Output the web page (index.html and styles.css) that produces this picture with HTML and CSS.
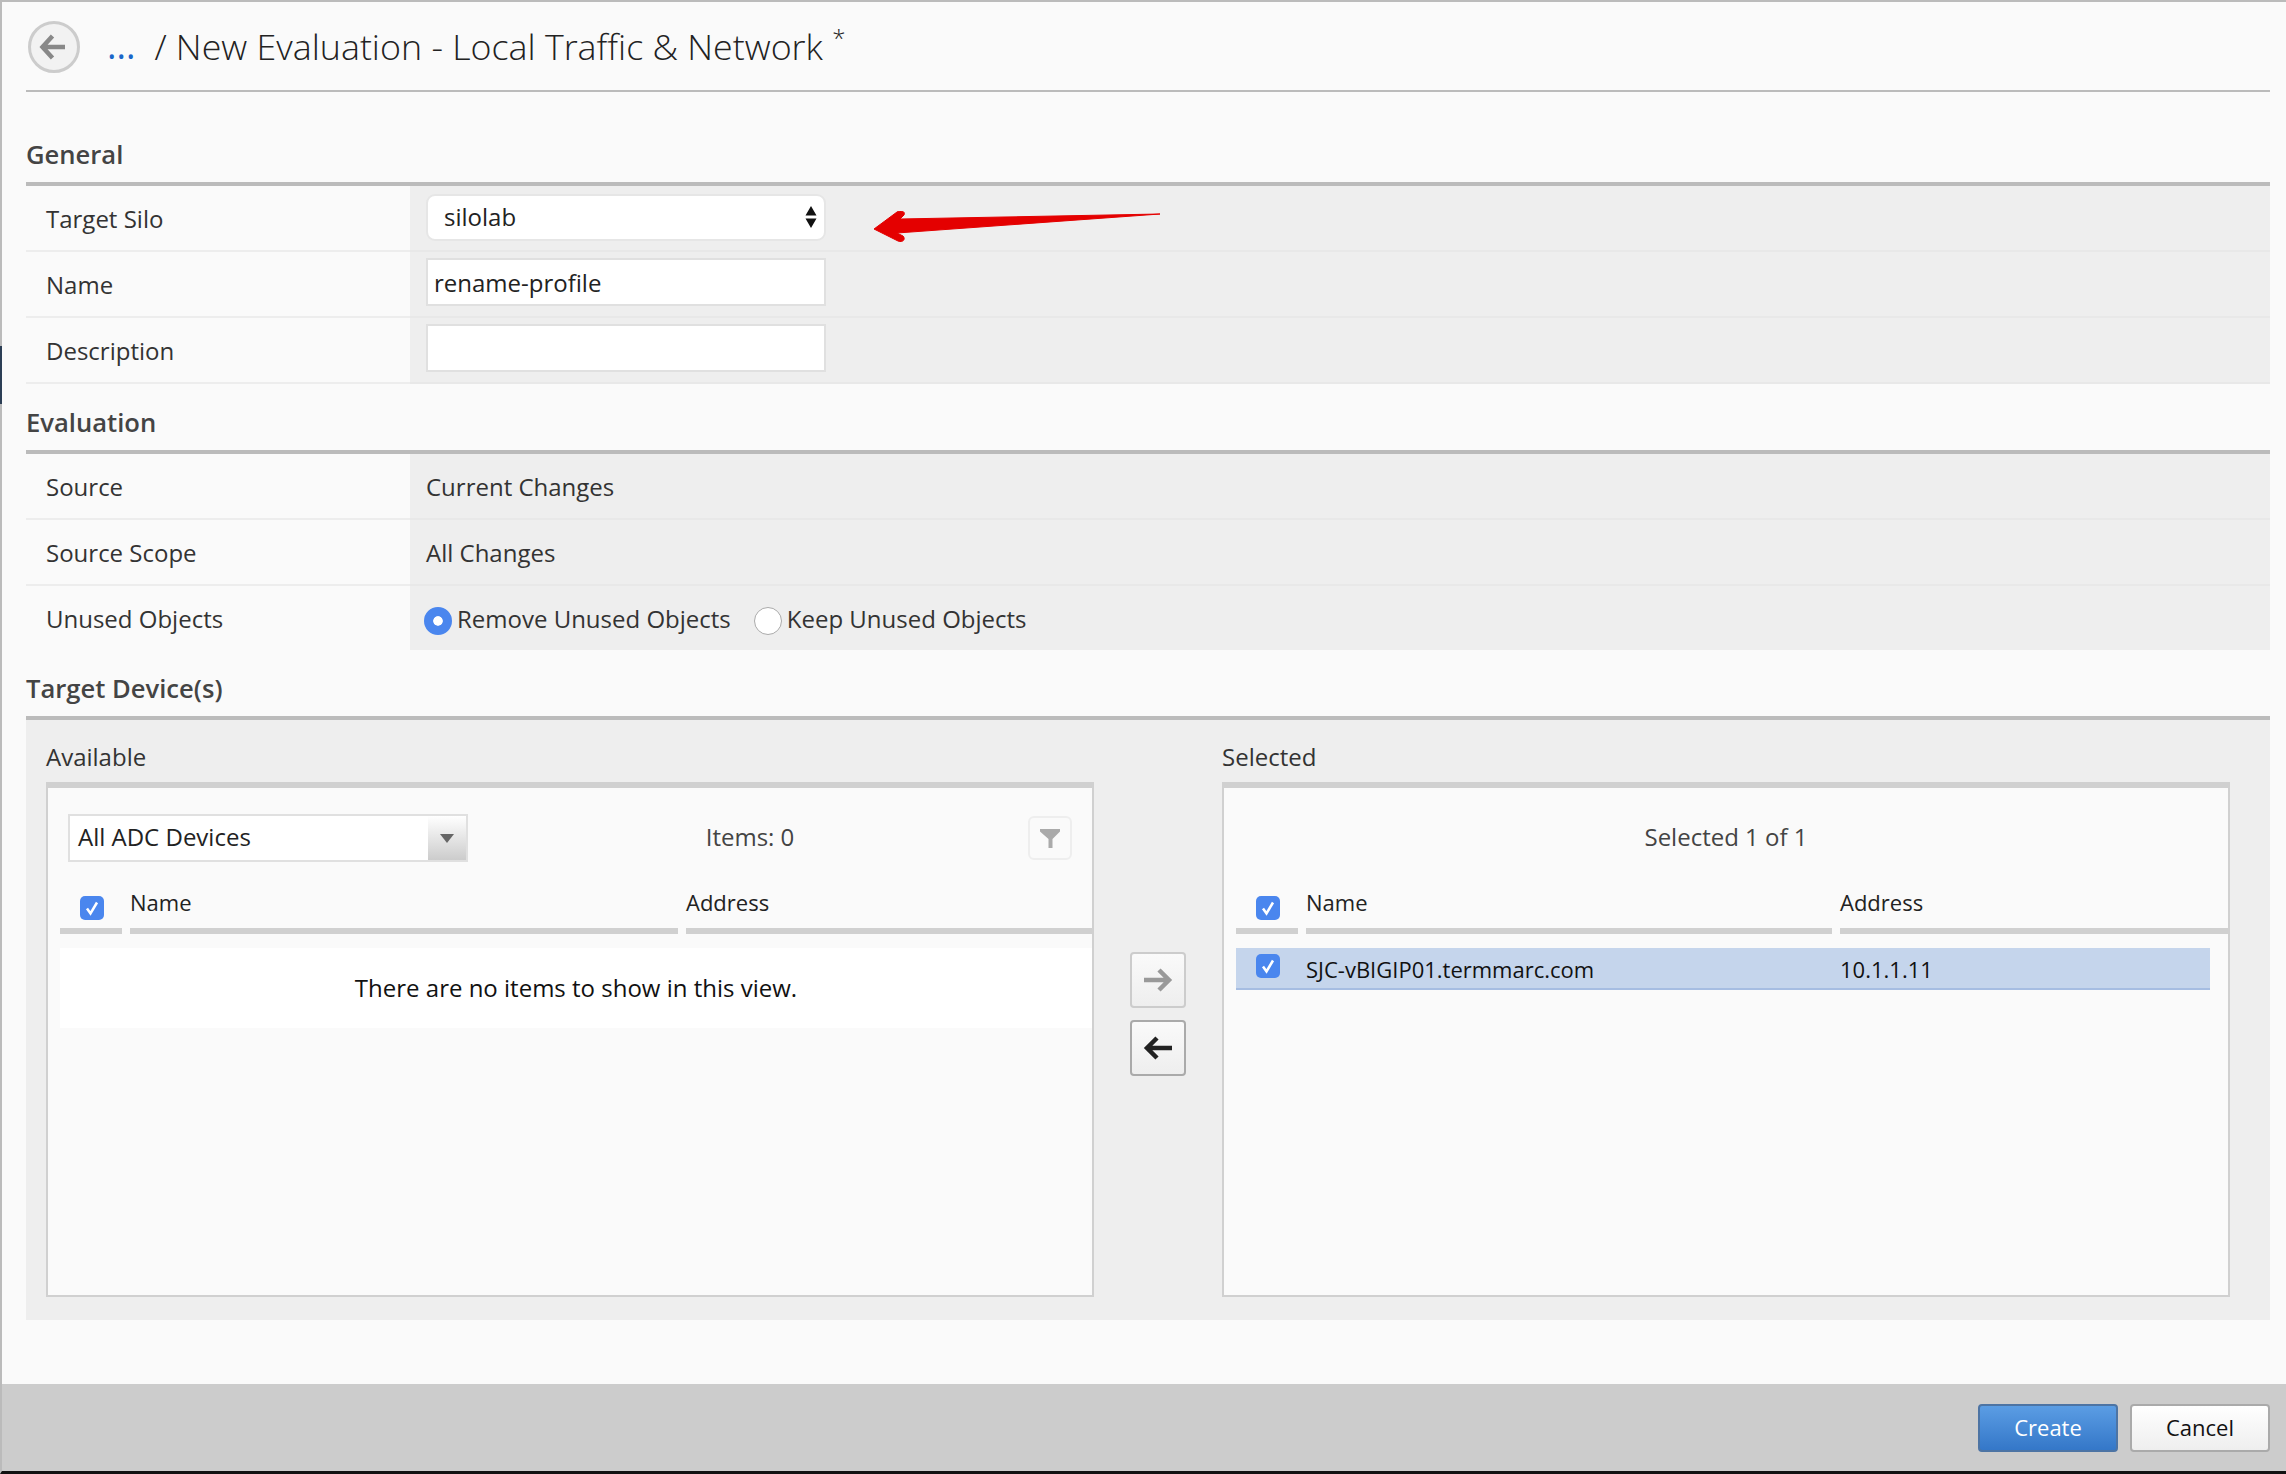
FILE: index.html
```html
<!DOCTYPE html>
<html lang="en">
<head>
  <meta charset="UTF-8">
  <title>New Evaluation - Local Traffic &amp; Network</title>
  <link rel="stylesheet" href="styles.css">
</head>
<body>
  <div class="window">
    <span class="edge-mark"></span>
    <div class="content">
      <div class="page-head">
        <a class="back-btn" href="#">
          <svg width="32" height="32" viewBox="0 0 32 32"><path d="M14.500 5 4.500 16l10 11M5 16h22" fill="none" stroke="#888" stroke-width="4.500"/></svg>
        </a>
        <a class="crumb" href="#">...</a>
        <h1 class="page-title">/ New Evaluation - Local Traffic &amp; Network <sup class="mark">*</sup></h1>
      </div>

      <h2 class="section-title">General</h2>
      <div class="form-row">
        <div class="form-label">Target Silo</div>
        <div class="form-value">
          <div class="fake-select">
            <span>silolab</span>
            <svg width="12" height="24" viewBox="0 0 12 24"><path d="M6 1 11.500 10.500H.5zM6 23 .5 13.500h11z" fill="#111"/></svg>
          </div>
        </div>
      </div>
      <div class="form-row">
        <div class="form-label">Name</div>
        <div class="form-value"><input class="text-input" type="text" value="rename-profile"></div>
      </div>
      <div class="form-row">
        <div class="form-label">Description</div>
        <div class="form-value"><input class="text-input" type="text"></div>
      </div>

      <h2 class="section-title">Evaluation</h2>
      <div class="form-row">
        <div class="form-label">Source</div>
        <div class="form-value form-text">Current Changes</div>
      </div>
      <div class="form-row">
        <div class="form-label">Source Scope</div>
        <div class="form-value form-text">All Changes</div>
      </div>
      <div class="form-row form-row-last">
        <div class="form-label">Unused Objects</div>
        <div class="form-value form-text">
          <div class="radio-group">
            <span class="radio radio-on"></span><span class="radio-text">Remove Unused Objects</span>
            <span class="radio"></span><span>Keep Unused Objects</span>
          </div>
        </div>
      </div>

      <h2 class="section-title">Target Device(s)</h2>
      <div class="devices">
        <div class="dev-col">
          <div class="dev-label">Available</div>
          <div class="dev-panel">
            <div class="toolbar">
              <div class="combo">
                <span class="combo-text">All ADC Devices</span>
                <span class="combo-btn"></span>
              </div>
              <div class="toolbar-text">Items: 0</div>
              <a class="filter-btn" href="#">
                <svg width="22" height="22" viewBox="0 0 22 22"><path d="M1 2h20v2.500L13.500 12v9h-4v-9L1 4.500z" fill="#aaa"/></svg>
              </a>
            </div>
            <div class="list-head list-head-left">
              <div class="head-cell head-check"><span class="check"><svg width="24" height="24" viewBox="0 0 24 24"><path d="m7 12.500 3.500 5L17 6.500" fill="none" stroke="#fff" stroke-width="2.500"/></svg></span></div>
              <div class="head-cell">Name</div>
              <div class="head-cell">Address</div>
            </div>
            <div class="empty-row">There are no items to show in this view.</div>
          </div>
        </div>

        <div class="move-btns">
          <a class="move-btn" href="#">
            <svg width="32" height="26" viewBox="0 0 32 26"><path d="M2 13h25M17 3l10 10-10 10" fill="none" stroke="#999" stroke-width="4.500"/></svg>
          </a>
          <a class="move-btn move-btn-on" href="#">
            <svg width="32" height="26" viewBox="0 0 32 26"><path d="M30 13H5M15 3 5 13l10 10" fill="none" stroke="#222" stroke-width="4.500"/></svg>
          </a>
        </div>

        <div class="dev-col">
          <div class="dev-label">Selected</div>
          <div class="dev-panel">
            <div class="toolbar">
              <div class="toolbar-text toolbar-text-sel">Selected 1 of 1</div>
            </div>
            <div class="list-head list-head-right">
              <div class="head-cell head-check"><span class="check"><svg width="24" height="24" viewBox="0 0 24 24"><path d="m7 12.500 3.500 5L17 6.500" fill="none" stroke="#fff" stroke-width="2.500"/></svg></span></div>
              <div class="head-cell">Name</div>
              <div class="head-cell">Address</div>
            </div>
            <div class="sel-row">
              <span class="check"><svg width="24" height="24" viewBox="0 0 24 24"><path d="m7 12.500 3.500 5L17 6.500" fill="none" stroke="#fff" stroke-width="2.500"/></svg></span>
              <span>SJC-vBIGIP01.termmarc.com</span>
              <span>10.1.1.11</span>
            </div>
          </div>
        </div>
      </div>
    </div>

    <div class="footer">
      <button class="btn btn-primary">Create</button>
      <button class="btn">Cancel</button>
    </div>

    <!-- annotation drawn on top of the screenshot -->
    <svg class="red-arrow" width="300" height="40" viewBox="0 0 300 40">
      <path d="M287 3 27 8 31 4C33 0 27-1 24 1L1 18 25 30C30 32 33 28 30 25L24 22 287 3Z" fill="#e40000" stroke="#e40000" stroke-width="1" stroke-linejoin="round"/>
    </svg>
  </div>
</body>
</html>
```

FILE: styles.css
```css
*{
  margin:0;
  padding:0;
  box-sizing:border-box;
}
html,body{
  height:100%;
}
body{
  font-family:"Open Sans","Liberation Sans",sans-serif;
  font-size:24px;
  line-height:36px;
  color:#222;
  background:#fafafa;
  overflow:hidden;
}
a{
  text-decoration:none;
}
.window{
  position:relative;
  height:1474px;
  display:flex;
  flex-direction:column;
  border-top:2px solid #bbb;
  border-left:2px solid #bbb;
  border-bottom:3px solid #111;
}
.edge-mark{
  position:absolute;
  left:-2px;
  top:344px;
  width:2px;
  height:58px;
  background:#2c3e55;
}
.content{
  flex:1;
  padding:0 16px 0 24px;
}

/* header */
.page-head{
  height:90px;
  display:flex;
  align-items:center;
  border-bottom:2px solid #bbb;
}
.back-btn{
  width:52px;
  height:52px;
  margin:2px 0 0 2px;
  border-radius:50%;
  border:3px solid #ccc;
  background:#f2f2f2;
  display:flex;
  align-items:center;
  justify-content:center;
}
.crumb{
  margin-left:27px;
  color:#1a66c9;
  font-size:36px;
}
.page-title{
  margin:0 0 0 19px;
  font-size:35.8px;
  font-weight:300;
  color:#222;
  white-space:nowrap;
}
.mark{
  font-size:24px;
  line-height:0;
}

/* sections */
.section-title{
  margin-top:20px;
  padding:1px 0 9px;
  font-size:25.6px;
  font-weight:600;
  color:#444;
  border-bottom:4px solid #bbb;
  box-sizing:content-box;
}
.page-head + .section-title{
  margin-top:44px;
}
.form-row{
  display:grid;
  grid-template-columns:384px 1fr;
  height:66px;
}
.form-row-last{
  height:64px;
}
.form-label{
  padding:15px 0 0 20px;
  border-bottom:2px solid #ededed;
  color:#333;
}
.form-value{
  padding-left:16px;
  background:#eee;
  border-bottom:2px solid #e8e8e8;
  display:flex;
  align-items:center;
}
.form-row-last .form-label,.form-row-last .form-value{
  border-bottom:0;
}
.form-text{
  padding:2px 0 0 16px;
  color:#333;
}
.fake-select{
  width:400px;
  height:47px;
  margin-bottom:1px;
  padding:0 7px 2px 16px;
  background:#fff;
  border:2px solid #e6e6e6;
  border-radius:9px;
  display:flex;
  align-items:center;
  justify-content:space-between;
}
.text-input{
  width:400px;
  height:48px;
  margin-bottom:4px;
  padding:0 6px;
  font:inherit;
  color:#222;
  background:#fff;
  border:2px solid #e0e0e0;
  outline:none;
}
.radio-group{
  display:flex;
  align-items:center;
}
.radio{
  width:28px;
  height:28px;
  margin:3px 5px 0 -2px;
  flex:none;
  border-radius:50%;
  background:#fff;
  border:1px solid #aaa;
}
.radio-on{
  background:#4a86ee;
  border:9px solid #4a86ee;
  box-shadow:inset 0 0 0 5px #fff;
}
.radio-text{
  margin-right:25px;
}

/* device picker */
.devices{
  display:flex;
  padding:19px 40px 23px 20px;
  background:#eee;
}
.dev-col{
  width:1048px;
}
.dev-col:last-child{
  width:1008px;
}
.dev-label{
  margin-bottom:7px;
  color:#333;
}
.dev-panel{
  height:515px;
  background:#fafafa;
  border:2px solid #d0d0d0;
  border-top-width:6px;
}
.toolbar{
  height:74px;
  padding:26px 20px 0;
  display:flex;
  align-items:center;
}
.combo{
  width:400px;
  height:48px;
  background:#fff;
  border:2px solid #e0e0e0;
  display:flex;
  justify-content:space-between;
}
.combo-text{
  padding-left:8px;
  line-height:42px;
}
.combo-btn{
  position:relative;
  width:38px;
  background:linear-gradient(#fff,#ccc);
}
.combo-btn:after{
  content:"";
  position:absolute;
  left:12px;
  top:18px;
  border:7px solid transparent;
  border-top:9px solid #666;
  border-bottom:0;
}
.toolbar-text{
  flex:1;
  padding:0 0 2px 4px;
  text-align:center;
  color:#444;
}
.toolbar-text-sel{
  padding-left:0;
}
.filter-btn{
  width:44px;
  height:44px;
  border:2px solid #eee;
  border-radius:6px;
  display:flex;
  align-items:center;
  justify-content:center;
}
.list-head{
  display:grid;
  column-gap:8px;
  margin-left:12px;
  height:72px;
  font-size:22px;
}
.list-head-left{
  grid-template-columns:62px 548px 1fr;
}
.list-head-right{
  grid-template-columns:62px 526px 1fr;
}
.head-cell{
  display:flex;
  align-items:flex-end;
  padding-bottom:8px;
  border-bottom:6px solid #d0d0d0;
  color:#222;
}
.head-check{
  padding-left:20px;
}
.check{
  display:block;
  width:24px;
  height:24px;
  background:#4a86ee;
  border-radius:5px;
}
.check svg{
  display:block;
}
.empty-row{
  margin:14px 0 0 12px;
  height:80px;
  line-height:80px;
  text-align:center;
  background:#fff;
  color:#111;
}
.sel-row{
  margin:14px 18px 0 12px;
  height:42px;
  display:grid;
  grid-template-columns:70px 534px 1fr;
  background:#c5d5ec;
  border-bottom:2px solid #a6bde2;
  line-height:42px;
  color:#111;
  font-size:22px;
}
.sel-row .check{
  margin:6px 0 0 20px;
}
.move-btns{
  width:128px;
  padding:213px 0 0 36px;
  display:flex;
  flex-direction:column;
  gap:12px;
}
.move-btn{
  width:56px;
  height:56px;
  border:2px solid #ccc;
  border-radius:4px;
  background:linear-gradient(#fafafa,#eee);
  display:flex;
  align-items:center;
  justify-content:center;
}
.move-btn-on{
  border-color:#aaa;
}

/* footer */
.footer{
  height:87px;
  padding:20px 16px 0 0;
  background:#ccc;
  display:flex;
  justify-content:flex-end;
  gap:12px;
}
.btn{
  width:140px;
  height:48px;
  padding-bottom:2px;
  font:inherit;
  font-size:22px;
  color:#111;
  background:linear-gradient(#fff,#eee);
  border:2px solid #aaa;
  border-radius:4px;
}
.btn-primary{
  color:#fff;
  background:linear-gradient(#5b9de4,#3477c8);
  border-color:#4d74a4;
}
.red-arrow{
  position:absolute;
  left:871px;
  top:209px;
}
```
